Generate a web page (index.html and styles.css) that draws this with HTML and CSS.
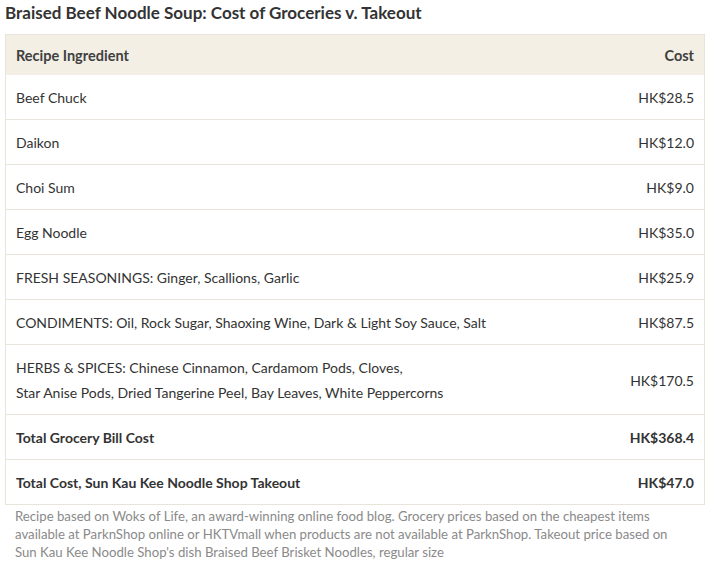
FILE: index.html
```html
<!DOCTYPE html>
<html>
<head>
<meta charset="utf-8">
<link rel="stylesheet" href="styles.css">
</head>
<body>
<div class="wrap">
  <h1 class="title">Braised Beef Noodle Soup: Cost of Groceries v. Takeout</h1>
  <table class="tbl">
    <thead>
      <tr><th class="name">Recipe Ingredient</th><th class="cost">Cost</th></tr>
    </thead>
    <tbody>
      <tr><td class="name">Beef Chuck</td><td class="cost">HK$28.5</td></tr>
      <tr><td class="name">Daikon</td><td class="cost">HK$12.0</td></tr>
      <tr><td class="name">Choi Sum</td><td class="cost">HK$9.0</td></tr>
      <tr><td class="name">Egg Noodle</td><td class="cost">HK$35.0</td></tr>
      <tr><td class="name">FRESH SEASONINGS: Ginger, Scallions, Garlic</td><td class="cost">HK$25.9</td></tr>
      <tr><td class="name">CONDIMENTS: Oil, Rock Sugar, Shaoxing Wine, Dark &amp; Light Soy Sauce, Salt</td><td class="cost">HK$87.5</td></tr>
      <tr><td class="name">HERBS &amp; SPICES: Chinese Cinnamon, Cardamom Pods, Cloves,<br>Star Anise Pods, Dried Tangerine Peel, Bay Leaves, White Peppercorns</td><td class="cost">HK$170.5</td></tr>
      <tr class="total"><td class="name">Total Grocery Bill Cost</td><td class="cost">HK$368.4</td></tr>
      <tr class="total"><td class="name">Total Cost, Sun Kau Kee Noodle Shop Takeout</td><td class="cost">HK$47.0</td></tr>
    </tbody>
  </table>
  <p class="note">Recipe based on Woks of Life, an award-winning online food blog. Grocery prices based on the cheapest items available at ParknShop online or HKTVmall when products are not available at ParknShop. Takeout price based on Sun Kau Kee Noodle Shop's dish Braised Beef Brisket Noodles, regular size</p>
</div>
</body>
</html>
```
FILE: styles.css
```css
html, body {
  margin: 0;
  padding: 0;
  background: #ffffff;
}
body {
  font-family: Lato, "Noto Sans", sans-serif;
  color: #333333;
}
.wrap {
  padding: 0 3px 0 5px;
}
.title {
  margin: 0;
  font-size: 17px;
  line-height: 26px;
  font-weight: 700;
  color: #333333;
  padding-bottom: 8px;
}
.tbl {
  width: 100%;
  border-collapse: collapse;
  border: 1px solid #e8e4da;
  font-size: 14px;
}
.tbl th {
  background: #f3efe5;
  font-weight: 700;
  font-size: 14.5px;
  height: 39px;
  padding: 1px 10px 0 10px;
  line-height: 20px;
  color: #404040;
}
.tbl td {
  padding: 10px 10px 9px 10px;
  line-height: 25px;
  border-top: 1px solid #e8e4da;
}
.tbl tbody tr:first-child td {
  border-top: none;
}
.name { text-align: left; }
.cost { text-align: right; white-space: nowrap; }
.total td { font-weight: 700; }
.note {
  margin: 2px 0 0 0;
  padding: 0 24px 0 10px;
  font-size: 13.2px;
  line-height: 18px;
  color: #8a8a8a;
}
```
